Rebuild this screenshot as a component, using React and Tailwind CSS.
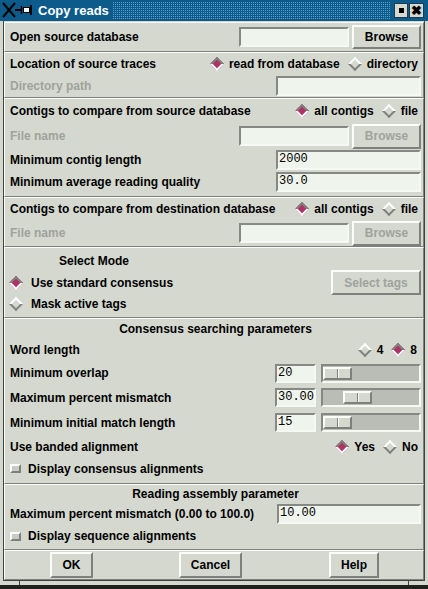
import React from 'react';

// Tk-style "Copy reads" dialog

const Diamond = ({ on }) => (
  <span className="w-[14px] h-[14px] flex items-center justify-center shrink-0">
    <span
      className={
        on
          ? 'w-[10px] h-[10px] rotate-45 border-2 border-t-[#7e817b] border-l-[#7e817b] border-b-white border-r-white bg-[#b03262]'
          : 'w-[10px] h-[10px] rotate-45 border-2 border-t-white border-l-white border-b-[#7e817b] border-r-[#7e817b] bg-[#d4d8cf]'
      }
    />
  </span>
);

const Radio = ({ on, label, gap = 'gap-[5px]' }) => (
  <span className={`flex items-center ${gap}`}>
    <Diamond on={on} />
    <span>{label}</span>
  </span>
);

const Entry = ({ w, h = 'h-[20px]', value }) => (
  <div
    className={`${w} ${h} shrink-0 border-2 border-t-[#868983] border-l-[#868983] border-b-[#f6f8f4] border-r-[#f6f8f4] bg-[#eff4ec] pl-[1px] font-['Liberation_Mono',monospace] font-normal text-[12px] leading-[15px] text-black`}
  >
    {value}
  </div>
);

const Btn = ({ w, h = 'h-[24px]', disabled, children }) => (
  <div
    className={`${w} ${h} shrink-0 flex items-center justify-center border-2 border-t-[#fbfdf9] border-l-[#fbfdf9] border-b-[#7e817b] border-r-[#7e817b] ${
      disabled ? 'text-[#9fa39c]' : 'text-black'
    }`}
  >
    {children}
  </div>
);

const Slider = ({ offset }) => (
  <div className="w-[100px] h-[19px] shrink-0 border-2 border-t-[#868983] border-l-[#868983] border-b-[#f6f8f4] border-r-[#f6f8f4] bg-[#b9bdb5] flex items-center">
    <div className={`${offset} w-[29px] h-[13px] border-2 border-t-[#fbfdf9] border-l-[#fbfdf9] border-b-[#7e817b] border-r-[#7e817b] bg-[#d4d8cf] flex justify-center`}>
      <span className="w-[1px] h-full bg-[#7e817b]" />
      <span className="w-[1px] h-full bg-white" />
    </div>
  </div>
);

const Check = ({ label }) => (
  <div className="flex items-center gap-[7px]">
    <span className="w-[11px] h-[9px] border-2 border-t-white border-l-white border-b-[#7e817b] border-r-[#7e817b] bg-[#c8ccc3]" />
    <span>{label}</span>
  </div>
);

const Section = ({ h, className = '', children }) => (
  <div
    className={`${h} shrink-0 flex flex-col border border-t-[#fbfdf9] border-l-[#fbfdf9] border-b-[#7e817b] border-r-[#7e817b] pl-[5px] pr-[2px] ${className}`}
  >
    {children}
  </div>
);

const TitleBar = () => (
  <div className="h-[21px] shrink-0 bg-[#0d5b8b] flex items-center">
    <svg width="36" height="21" viewBox="0 0 36 21" className="shrink-0">
      <path d="M3 3 L15 17 M15 3 L3 17" stroke="#000" strokeWidth="2" />
      <path d="M15 10 H21" stroke="#000" strokeWidth="2" />
      <path d="M21.5 6 V14" stroke="#000" strokeWidth="1.5" />
      <rect x="23.5" y="7.5" width="6" height="5" fill="#fff" stroke="#000" />
      <path d="M31 5 V15" stroke="#000" strokeWidth="2" />
    </svg>
    <span className="ml-[2px] text-white text-[13px] font-bold leading-none shrink-0">Copy reads</span>
    {/* grip dots */}
    <div className="ml-[4px] mr-[3px] flex-1 h-[17px]">
      <svg width="100%" height="100%">
        <defs>
          <pattern id="grip" width="2" height="2" patternUnits="userSpaceOnUse">
            <rect x="0" y="0" width="1" height="1" fill="#5a9fd0" />
          </pattern>
        </defs>
        <rect x="0" y="0" width="100%" height="100%" fill="url(#grip)" />
      </svg>
    </div>
    <div className="w-[14px] h-[15px] bg-[#d4d8cf] border border-[#1a3c56] flex items-center justify-center">
      <span className="w-[5px] h-[5px] bg-black" />
    </div>
    <div className="ml-[1px] mr-[4px] w-[15px] h-[15px] bg-[#d4d8cf] border border-[#1a3c56] flex items-center justify-center text-black text-[13px] font-bold leading-none">
      ✖
    </div>
  </div>
);

export default function App() {
  return (
    <div className="w-[428px] h-[589px] overflow-hidden bg-[#d4d8cf] flex flex-col font-['Liberation_Sans',Arial,sans-serif] text-[12px] font-bold text-black leading-none">
      <TitleBar />
      <div className="flex-1 flex flex-col px-[3px] bg-[#d4d8cf]">
        <div className="flex flex-col border-l border-r border-b border-[#3f423d] pt-[1px]">
          {/* open database */}
          <Section h="h-[30px]">
            <div className="h-full flex items-center justify-between">
              <span>Open source database</span>
              <div className="flex items-center gap-[3px]">
                <Entry w="w-[110px]" />
                <Btn w="w-[69px]">Browse</Btn>
              </div>
            </div>
          </Section>

          {/* source traces */}
          <Section h="h-[46px]">
            <div className="h-[22px] flex items-center justify-between">
              <span>Location of source traces</span>
              <div className="flex items-center gap-[8px] mr-[3px]">
                <Radio on label="read from database" />
                <Radio label="directory" />
              </div>
            </div>
            <div className="h-[22px] flex items-center justify-between">
              <span className="text-[#9fa39c]">Directory path</span>
              <Entry w="w-[145px]" />
            </div>
          </Section>

          {/* source contigs */}
          <Section h="h-[99px]">
            <div className="h-[24px] flex items-center justify-between">
              <span>Contigs to compare from source database</span>
              <div className="flex items-center gap-[8px] mr-[3px]">
                <Radio on label="all contigs" />
                <Radio label="file" />
              </div>
            </div>
            <div className="h-[26px] flex items-center justify-between">
              <span className="text-[#9fa39c]">File name</span>
              <div className="flex items-center gap-[3px]">
                <Entry w="w-[110px]" />
                <Btn w="w-[69px]" h="h-[25px]" disabled>Browse</Btn>
              </div>
            </div>
            <div className="h-[22px] flex items-center justify-between">
              <span>Minimum contig length</span>
              <Entry w="w-[145px]" value="2000" />
            </div>
            <div className="h-[21px] flex items-center justify-between">
              <span>Minimum average reading quality</span>
              <Entry w="w-[145px]" value="30.0" />
            </div>
          </Section>

          {/* destination contigs */}
          <Section h="h-[50px]">
            <div className="h-[22px] flex items-center justify-between">
              <span>Contigs to compare from destination database</span>
              <div className="flex items-center gap-[8px] mr-[3px]">
                <Radio on label="all contigs" />
                <Radio label="file" />
              </div>
            </div>
            <div className="h-[26px] flex items-center justify-between">
              <span className="text-[#9fa39c]">File name</span>
              <div className="flex items-center gap-[3px]">
                <Entry w="w-[110px]" />
                <Btn w="w-[69px]" h="h-[25px]" disabled>Browse</Btn>
              </div>
            </div>
          </Section>

          {/* select mode */}
          <Section h="h-[71px]" className="!pl-[4px]">
            <div className="h-full flex items-center justify-between">
              <div className="w-[180px] flex flex-col pt-[2px] pb-[3px]">
                <div className="h-[22px] flex items-center justify-center pr-[10px]">Select Mode</div>
                <div className="h-[21px] flex items-center">
                  <Radio on label="Use standard consensus" gap="gap-[8px]" />
                </div>
                <div className="h-[21px] flex items-center">
                  <Radio label="Mask active tags" gap="gap-[8px]" />
                </div>
              </div>
              <Btn w="w-[90px]" h="h-[25px]" disabled>Select tags</Btn>
            </div>
          </Section>

          {/* consensus searching */}
          <Section h="h-[166px]">
            <div className="h-[20px] flex items-center justify-center">Consensus searching parameters</div>
            <div className="h-[22px] flex items-center justify-between">
              <span>Word length</span>
              <div className="flex items-center gap-[8px] mr-[4px]">
                <Radio label="4" />
                <Radio on label="8" />
              </div>
            </div>
            <div className="h-[24px] flex items-center justify-between">
              <span>Minimum overlap</span>
              <div className="flex items-center gap-[5px]">
                <Entry w="w-[41px]" h="h-[19px]" value="20" />
                <Slider offset="ml-[0px]" />
              </div>
            </div>
            <div className="h-[25px] flex items-center justify-between">
              <span>Maximum percent mismatch</span>
              <div className="flex items-center gap-[5px]">
                <Entry w="w-[41px]" h="h-[19px]" value="30.00" />
                <Slider offset="ml-[20px]" />
              </div>
            </div>
            <div className="h-[25px] flex items-center justify-between">
              <span>Minimum initial match length</span>
              <div className="flex items-center gap-[5px]">
                <Entry w="w-[41px]" h="h-[19px]" value="15" />
                <Slider offset="ml-[0px]" />
              </div>
            </div>
            <div className="h-[23px] flex items-center justify-between">
              <span>Use banded alignment</span>
              <div className="flex items-center gap-[8px] mr-[3px]">
                <Radio on label="Yes" />
                <Radio label="No" />
              </div>
            </div>
            <div className="h-[21px] flex items-center">
              <Check label="Display consensus alignments" />
            </div>
          </Section>

          {/* reading assembly */}
          <Section h="h-[66px]">
            <div className="h-[18px] flex items-center justify-center">Reading assembly parameter</div>
            <div className="h-[22px] flex items-center justify-between">
              <span>Maximum percent mismatch (0.00 to 100.0)</span>
              <Entry w="w-[144px]" value="10.00" />
            </div>
            <div className="h-[22px] flex items-center">
              <Check label="Display sequence alignments" />
            </div>
          </Section>

          {/* buttons */}
          <Section h="h-[30px]" className="!pl-0 !pr-0">
            <div className="h-full flex items-center">
              <div className="ml-[45px]">
                <Btn w="w-[43px]" h="h-[26px]">OK</Btn>
              </div>
              <div className="ml-[86px]">
                <Btn w="w-[63px]" h="h-[26px]">Cancel</Btn>
              </div>
              <div className="ml-[87px]">
                <Btn w="w-[50px]" h="h-[26px]">Help</Btn>
              </div>
            </div>
          </Section>
        </div>
        <div className="h-[4px] flex">
          <div className="w-[17px] border-r border-[#3f423d]" />
          <div className="flex-1" />
          <div className="w-[17px] border-l border-[#3f423d]" />
        </div>
      </div>
      <div className="h-[4px] shrink-0 bg-[#1e201d]" />
    </div>
  );
}
